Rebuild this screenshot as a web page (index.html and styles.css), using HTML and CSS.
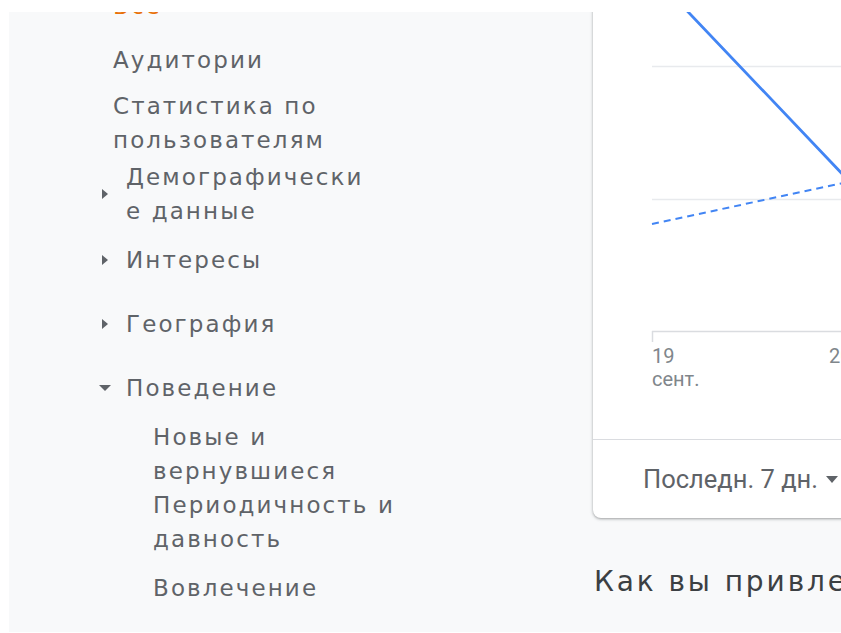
FILE: index.html
```html
<!DOCTYPE html>
<html lang="ru">
<head>
<meta charset="utf-8">
<title>Аналитика — Аудитории</title>
<link rel="stylesheet" href="styles.css">
</head>
<body>
<div class="frame">
  <div class="page">
    <aside class="sidebar">
      <ul class="nav nav-top">
        <li class="nav-item is-active">Все</li>
      </ul>
      <ul class="nav">
        <li class="nav-item">Аудитории</li>
        <li class="nav-item">Статистика по<br>пользователям</li>
        <li>
          <ul class="tree">
            <li class="tree-row"><span class="caret-box"><span class="caret caret-right"></span></span><span class="label">Демографически<br>е данные</span></li>
            <li class="tree-row"><span class="caret-box"><span class="caret caret-right"></span></span><span class="label">Интересы</span></li>
            <li class="tree-row"><span class="caret-box"><span class="caret caret-right"></span></span><span class="label">География</span></li>
            <li class="tree-row"><span class="caret-box"><span class="caret caret-down"></span></span><span class="label">Поведение</span></li>
            <li>
              <ul class="sub">
                <li class="sub-item">Новые и<br>вернувшиеся</li>
                <li class="sub-item">Периодичность и<br>давность</li>
                <li class="sub-item">Вовлечение</li>
              </ul>
            </li>
          </ul>
        </li>
      </ul>
    </aside>

    <main class="content">
      <section class="card">
        <svg class="chart" width="640" height="503" viewBox="0 0 640 503">
          <g class="grid">
            <line x1="59" y1="130.5" x2="640" y2="130.5"/>
            <line x1="59" y1="263.5" x2="640" y2="263.5"/>
          </g>
          <line class="axis" x1="59" y1="395.5" x2="640" y2="395.5"/>
          <line class="axis" x1="59.5" y1="395" x2="59.5" y2="406"/>
          <text class="tick-label" x="59" y="427">19</text>
          <text class="tick-label" x="59" y="450">сент.</text>
          <text class="tick-label" x="236" y="427">20</text>
          <polyline class="series-prev" points="59,288 236,250 413,212 590,190"/>
          <polyline class="series-main" points="59,38 236,224 413,410 590,380"/>
        </svg>
        <div class="card-footer">
          <span class="range">Последн. 7 дн.</span>
          <span class="range-caret"></span>
        </div>
      </section>
      <h2 class="section-title">Как вы привлекаете пользователей?</h2>
    </main>
  </div>
</div>
</body>
</html>
```
FILE: styles.css
```css
html, body {
  margin: 0;
  background: #ffffff;
}

.frame {
  margin: 12px 0 0 9px;
  width: 832px;
  height: 620px;
  overflow: hidden;
  background: #f8f9fa;
}

/* scrolled page contents */
.page {
  margin-top: -100px;
  display: grid;
  grid-template-columns: 584px minmax(0, 1fr);
}

/* ---------- sidebar ---------- */
.sidebar {
  padding: 65px 0 0 88px;
  font-family: "DejaVu Sans", sans-serif;
  font-size: 23px;
  letter-spacing: 2.1px;
  line-height: 34px;
  color: #5f6368;
}

.nav, .tree, .sub {
  list-style: none;
  margin: 0;
  padding: 0;
}

.nav-top {
  margin-bottom: 8px;
}

.nav-item {
  padding: 12px 0 0 16px;
  white-space: nowrap;
}

.nav-item.is-active {
  color: #e8710a;
}

.tree {
  padding-top: 3px;
}

.tree-row {
  display: flex;
  align-items: center;
  min-height: 64px;
  white-space: nowrap;
}

.caret-box {
  width: 16px;
  margin-right: 13px;
  display: flex;
  justify-content: center;
  flex: none;
}

.caret {
  width: 0;
  height: 0;
}

.caret-right {
  border-left: 6px solid #5f6368;
  border-top: 5px solid transparent;
  border-bottom: 5px solid transparent;
}

.caret-down {
  border-top: 6px solid #5f6368;
  border-left: 6px solid transparent;
  border-right: 6px solid transparent;
}

.sub-item {
  display: flex;
  align-items: center;
  min-height: 64px;
  padding-left: 56px;
  white-space: nowrap;
}

/* ---------- content ---------- */
.content {
  font-family: Roboto, "Liberation Sans", sans-serif;
}

.card {
  margin-top: 24px;
  width: 640px;
  background: #ffffff;
  border-radius: 0 0 8px 8px;
  box-shadow: 0 1px 2px rgba(60, 64, 67, 0.3), 0 1px 3px 1px rgba(60, 64, 67, 0.15);
}

.chart {
  display: block;
}

.grid line {
  stroke: #e8eaed;
  stroke-width: 1.5;
}

.axis {
  stroke: #dadce0;
  stroke-width: 1.5;
}

.tick-label {
  font-family: Roboto, "Liberation Sans", sans-serif;
  font-size: 20px;
  fill: #80868b;
}

.series-main {
  fill: none;
  stroke: #4285f4;
  stroke-width: 2.8;
}

.series-prev {
  fill: none;
  stroke: #4285f4;
  stroke-width: 2;
  stroke-dasharray: 7 5;
}

.card-footer {
  border-top: 1px solid #dadce0;
  height: 78px;
  padding-left: 50px;
  display: flex;
  align-items: center;
  color: #5f6368;
  font-size: 25.5px;
  white-space: nowrap;
}

.range-caret {
  margin-left: 8px;
  width: 0;
  height: 0;
  border-top: 7px solid #5f6368;
  border-left: 6px solid transparent;
  border-right: 6px solid transparent;
}

.section-title {
  margin: 46px 0 0 1px;
  font-family: "DejaVu Sans", sans-serif;
  font-size: 28px;
  font-weight: 400;
  letter-spacing: 2.9px;
  line-height: 36px;
  color: #3c4043;
  white-space: nowrap;
}
```
